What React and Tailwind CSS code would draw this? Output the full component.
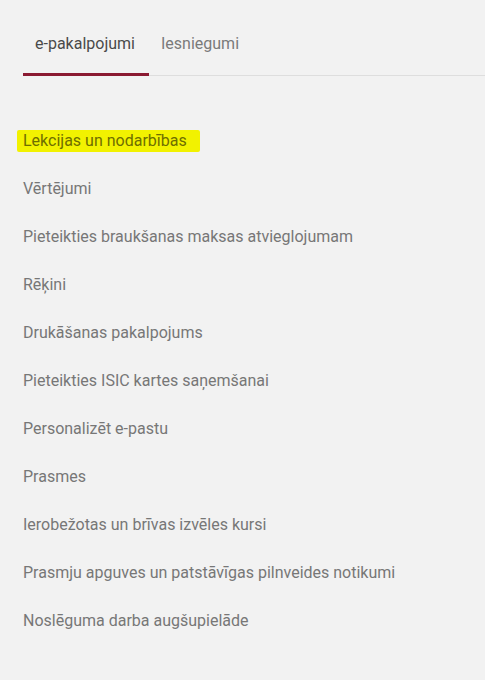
import React from "react";

const items = [
  "Vērtējumi",
  "Pieteikties braukšanas maksas atvieglojumam",
  "Rēķini",
  "Drukāšanas pakalpojums",
  "Pieteikties ISIC kartes saņemšanai",
  "Personalizēt e-pastu",
  "Prasmes",
  "Ierobežotas un brīvas izvēles kursi",
  "Prasmju apguves un patstāvīgas pilnveides notikumi",
  "Noslēguma darba augšupielāde",
];

export default function App() {
  return (
    <div
      className="w-[485px] h-[680px] bg-[#f2f2f2] overflow-hidden"
      style={{ fontFamily: "Roboto, 'Noto Sans', sans-serif" }}
    >
      <div className="ml-[23px] pt-[24px] flex border-b border-[#dedede]">
        <div className="pl-[12px] pr-[14px] pt-[10px] pb-[19px] border-b-[3px] border-[#8b1a32] -mb-px text-[16px] leading-[20px] text-[#4a4a4a]">
          e-pakalpojumi
        </div>
        <div className="px-[12px] pt-[10px] pb-[19px] text-[16px] leading-[20px] text-[#7a7a7a]">
          Iesniegumi
        </div>
      </div>
      <ul className="mt-[41px] text-[16px] leading-[20px] text-[#777777]">
        <li className="py-[14px] pl-[17px]">
          <span className="inline-block bg-[#f2f200] pl-[6px] pr-[13px] py-[1px] rounded-[2px] text-[#6e6e00] -my-px">
            Lekcijas un nodarbības
          </span>
        </li>
        {items.map((t) => (
          <li key={t} className="py-[14px] pl-[23px]">
            {t}
          </li>
        ))}
      </ul>
    </div>
  );
}
